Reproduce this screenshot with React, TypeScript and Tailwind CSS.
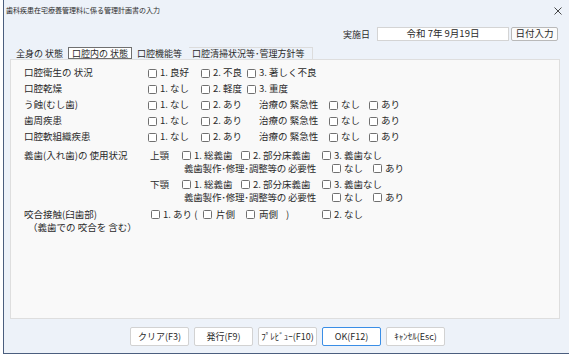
import React from "react";

const Box = () => (
  <span className="inline-block w-[9px] h-[9px] border border-[#707070] rounded-[1.5px] bg-white shrink-0" />
);

interface OptProps {
  label: string;
  w?: string;
  gap?: string;
}

const Opt: React.FC<OptProps> = ({ label, w = "", gap = "gap-[3px]" }) => (
  <div className={`flex items-center shrink-0 ${gap} ${w}`}>
    <Box />
    <span className="whitespace-pre">{label}</span>
  </div>
);

const threeRows = [
  { label: "口腔衛生の 状況", opts: ["1. 良好", "2. 不良", "3. 著しく不良"] },
  { label: "口腔乾燥", opts: ["1. なし", "2. 軽度", "3. 重度"] },
];

const urgentRows = ["う蝕(むし歯)", "歯周疾患", "口腔軟組織疾患"];

const buttons = ["クリア(F3)", "発行(F9)", "ﾌﾟﾚﾋﾞｭｰ(F10)", "OK(F12)", "ｷｬﾝｾﾙ(Esc)"];

const DentureBlock: React.FC<{ jaw: string; first?: boolean }> = ({ jaw, first }) => (
  <div className={first ? "" : "mt-[3px]"}>
    <div className="flex items-center h-[13px]">
      <div className="w-[126px] shrink-0 whitespace-pre">{first ? "義歯(入れ歯)の 使用状況" : ""}</div>
      <div className="w-[32px] shrink-0">{jaw}</div>
      <Opt label="1. 総義歯" w="w-[59px]" />
      <Opt label="2. 部分床義歯" w="w-[81px]" />
      <Opt label="3. 義歯なし" />
    </div>
    <div className="flex items-center h-[13px]">
      <div className="w-[160px] shrink-0" />
      <div className="w-[148px] shrink-0 whitespace-pre tracking-[-0.2px]">義歯製作･修理･調整等の 必要性</div>
      <Opt label="なし" w="w-[41px]" />
      <Opt label="あり" />
    </div>
  </div>
);

export default function App() {
  return (
    <div className="w-[572px] h-[357px] bg-white font-['Noto_Sans_CJK_JP','Noto_Sans',sans-serif] text-[#2a2a2a] overflow-hidden">
      <div className="ml-[3px] w-[566px] h-[354px] bg-[#edf2f9] border-l border-b border-[#4b5e7e] flex flex-col">
        {/* title bar */}
        <div className="h-[20px] flex items-center justify-between pl-[2px] pr-[7px]">
          <span className="text-[7px] leading-none">歯科疾患在宅療養管理料に係る管理計画書の入力</span>
          <svg width="8" height="8" viewBox="0 0 8 8" className="mt-[2px]">
            <path d="M0.5 0.5 L7.5 7.5 M7.5 0.5 L0.5 7.5" stroke="#333" strokeWidth="0.9" />
          </svg>
        </div>

        {/* date row */}
        <div className="mt-[6px] h-[16px] flex items-center justify-end pr-[11px] text-[9px] leading-none">
          <span className="mr-[7px]">実施日</span>
          <div className="w-[132px] h-[14px] bg-white border border-[#d4d4d4] flex items-center justify-center text-[9.5px] whitespace-pre">
            令和 7年 9月19日
          </div>
          <div className="ml-[2px] w-[47px] h-[14px] bg-[#fbfbfb] border border-[#b9b9b9] rounded-[2px] flex items-center justify-center text-[9.5px]">
            日付入力
          </div>
        </div>

        {/* tabs */}
        <div className="mt-[5px] h-[12px] flex items-stretch pl-[10px] text-[9px] leading-none">
          <div className="w-[54px] flex items-center pl-[2px] whitespace-pre">全身の 状態</div>
          <div className="w-[64px] flex items-center pl-[3px] border border-[#707070] bg-white whitespace-pre">口腔内の 状態</div>
          <div className="w-[57px] flex items-center pl-[5px]">口腔機能等</div>
          <div className="w-[124px] flex items-center pl-[3px] border-t border-r border-[#dcdcdc] whitespace-nowrap">口腔清掃状況等･管理方針等</div>
        </div>

        {/* panel */}
        <div className="ml-[6px] w-[550px] h-[260px] bg-[#f9f9f9] border border-[#dedede] pt-[5px] pl-[13px] text-[9.5px] leading-none">
          {threeRows.map((r) => (
            <div key={r.label} className="flex items-center h-[16px]">
              <div className="w-[124px] shrink-0 whitespace-pre">{r.label}</div>
              <Opt label={r.opts[0]} w="w-[53px]" />
              <Opt label={r.opts[1]} w="w-[46px]" />
              <Opt label={r.opts[2]} />
            </div>
          ))}
          {urgentRows.map((label) => (
            <div key={label} className="flex items-center h-[16px]">
              <div className="w-[124px] shrink-0">{label}</div>
              <Opt label="1. なし" w="w-[53px]" />
              <Opt label="2. あり" w="w-[58px]" />
              <div className="w-[70px] shrink-0 whitespace-pre">治療の 緊急性</div>
              <Opt label="なし" w="w-[40px]" />
              <Opt label="あり" />
            </div>
          ))}

          <div className="mt-[4px]">
            <DentureBlock jaw="上顎" first />
            <DentureBlock jaw="下顎" />
          </div>

          <div className="mt-[4px]">
            <div className="flex items-center h-[13px]">
              <div className="w-[127px] shrink-0">咬合接触(臼歯部)</div>
              <Opt label="1. あり (" w="w-[52px]" />
              <Opt label="片側" w="w-[43px]" gap="gap-[4px]" />
              <Opt label="両側" w="w-[40px]" gap="gap-[4px]" />
              <span className="w-[36px] shrink-0">)</span>
              <Opt label="2. なし" />
            </div>
            <div className="flex items-center h-[13px] pl-[4px]">（義歯での 咬合を 含む）</div>
          </div>
        </div>

        {/* buttons */}
        <div className="mt-[8px] flex gap-[5px] pl-[126px] text-[9px] leading-none">
          {buttons.map((b) => (
            <div
              key={b}
              className={`w-[59px] h-[19px] bg-white rounded-[2px] flex items-center justify-center border ${
                b === "OK(F12)" ? "border-[#3a8ee6]" : "border-[#d2d2d2]"
              }`}
            >
              {b}
            </div>
          ))}
        </div>
      </div>
    </div>
  );
}
